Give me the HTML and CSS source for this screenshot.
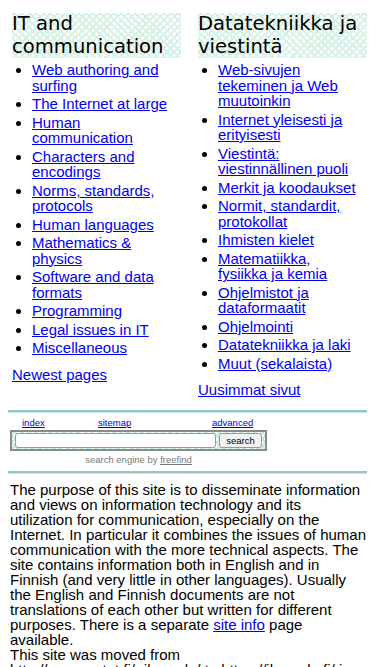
FILE: index.html
```html
<!DOCTYPE html>
<html lang="en">
<head>
    <meta charset="UTF-8">
    <meta name="viewport" content="width=device-width, initial-scale=1.0">
    <title>IT and communication</title>
    <link rel="stylesheet" href="styles.css">
</head>
<body>
    <div class="columns">
        <div class="column" lang="en">
            <h2 class="topic">IT and communication</h2>
            <ul class="topics">
                <li><a href="#">Web authoring and surfing</a></li>
                <li><a href="#">The Internet at large</a></li>
                <li><a href="#">Human communication</a></li>
                <li><a href="#">Characters and encodings</a></li>
                <li><a href="#">Norms, standards, protocols</a></li>
                <li><a href="#">Human languages</a></li>
                <li><a href="#">Mathematics &amp; physics</a></li>
                <li><a href="#">Software and data formats</a></li>
                <li><a href="#">Programming</a></li>
                <li><a href="#">Legal issues in IT</a></li>
                <li><a href="#">Miscellaneous</a></li>
            </ul>
            <p class="newest"><a href="#">Newest pages</a></p>
        </div>
        <div class="column" lang="fi">
            <h2 class="topic">Datatekniikka ja viestintä</h2>
            <ul class="topics">
                <li><a href="#">Web-sivujen tekeminen ja Web muutoinkin</a></li>
                <li><a href="#">Internet yleisesti ja erityisesti</a></li>
                <li><a href="#">Viestintä: viestinnällinen puoli</a></li>
                <li><a href="#">Merkit ja koodaukset</a></li>
                <li><a href="#">Normit, standardit, protokollat</a></li>
                <li><a href="#">Ihmisten kielet</a></li>
                <li><a href="#">Matematiikka, fysiikka ja kemia</a></li>
                <li><a href="#">Ohjelmistot ja dataformaatit</a></li>
                <li><a href="#">Ohjelmointi</a></li>
                <li><a href="#">Datatekniikka ja laki</a></li>
                <li><a href="#">Muut (sekalaista)</a></li>
            </ul>
            <p class="newest"><a href="#">Uusimmat sivut</a></p>
        </div>
    </div>

    <hr class="rule">

    <div class="search">
        <div class="search-links">
            <a href="#">index</a>
            <a href="#">sitemap</a>
            <a href="#">advanced</a>
        </div>
        <form class="search-form">
            <input type="text" name="query" class="search-input">
            <button type="submit" class="search-button">search</button>
        </form>
        <div class="search-credit">search engine by <a href="#">freefind</a></div>
    </div>

    <hr class="rule rule-after">

    <p class="intro">The purpose of this site is to disseminate information and views on information technology and its utilization for communication, especially on the Internet. In particular it combines the issues of human communication with the more technical aspects. The site contains information both in English and in Finnish (and very little in other languages). Usually the English and Finnish documents are not translations of each other but written for different purposes. There is a separate <a href="#">site info</a> page available.<br>
    This site was moved from http://www.cs.tut.fi/~jkorpela/ to https://jkorpela.fi/ in 2012.</p>
</body>
</html>
```

FILE: styles.css
```css
body {
    margin: 8px;
    font-family: 'Liberation Sans', Arial, sans-serif;
    font-size: 15px;
    color: #000;
    background-color: #fff;
}
a {
    color: #0000ee;
}
.columns {
    display: grid;
    grid-template-columns: 1fr 1fr;
    column-gap: 17px;
    padding-left: 4px;
}
.topic {
    margin: 5px 0 0;
    font-family: 'DejaVu Sans', Verdana, sans-serif;
    font-size: 19.6px;
    font-weight: normal;
    line-height: 22.5px;
    background-color: #fff;
    background-image:
        repeating-linear-gradient(45deg, transparent 0 3px, #d6f2e5 3px 5px),
        repeating-linear-gradient(-45deg, transparent 0 3px, #d6f2e5 3px 5px);
}
.topics {
    margin: 4px 0 0;
    padding: 0 5px 0 20px;
    line-height: 15.5px;
}
.topics li {
    margin-bottom: 3px;
}
.newest {
    margin: 10px 0 0;
    line-height: 17px;
}
.rule {
    margin: 12px 0 0;
    border: none;
    border-top: 2px solid #8fc8c8;
    border-bottom: 1px solid #c4e2e2;
    height: 0;
}
.rule-after {
    margin-top: 6px;
}
.search {
    width: 257px;
    margin: 4px 0 0 2px;
    font-size: 9.5px;
}
.search-links {
    display: grid;
    grid-template-columns: 76px 114px auto;
    padding-left: 12px;
}
.search-form {
    display: flex;
    gap: 3px;
    margin: 2px 0 0;
    padding: 1px 3px;
    border: 2px solid #8a8a8a;
    background-color: #fff;
    background-image:
        repeating-linear-gradient(45deg, transparent 0 3px, #c8ecdb 3px 5px),
        repeating-linear-gradient(-45deg, transparent 0 3px, #c8ecdb 3px 5px);
}
.search-input {
    flex: 1;
    height: 15px;
    padding: 0 3px;
    border: 1px solid #999;
    border-radius: 3px;
    background: #fff;
    box-sizing: border-box;
}
.search-button {
    width: 43px;
    height: 15px;
    padding: 0;
    border: 1px solid #999;
    border-radius: 3px;
    background: #f2f2f2;
    font-family: 'Liberation Sans', Arial, sans-serif;
    font-size: 9.5px;
    color: #000;
}
.search-credit {
    margin-top: 3px;
    text-align: center;
    color: #777;
}
.search-credit a {
    color: #777;
}
.intro {
    margin: 8px 0 0 2px;
    line-height: 15px;
}
```
